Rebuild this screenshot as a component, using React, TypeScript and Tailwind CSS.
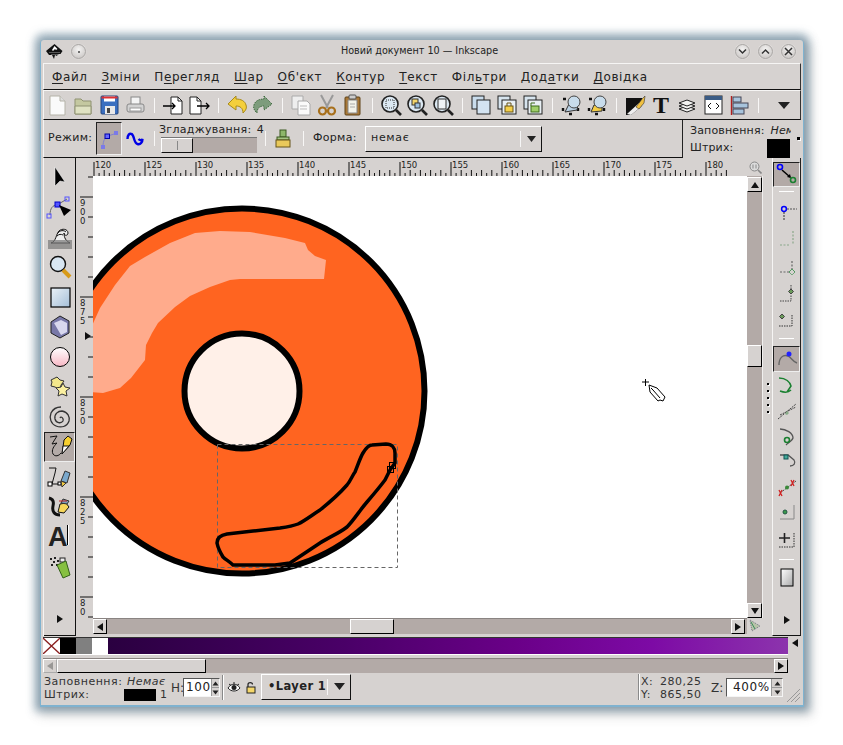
import React from "react";

type P = { children?: React.ReactNode; w?: number; h?: number };
const S = ({ children, w = 24, h = 24 }: P) => (
  <svg width={w} height={h} viewBox={`0 0 ${w} ${h}`}>{children}</svg>
);

const Sep = () => (
  <div className="w-[12px] h-full flex items-center justify-center shrink-0">
    <div className="w-[1px] h-[15px] bg-[#f8f7f6]" />
  </div>
);

const top: React.ReactNode[] = [
  <S key="new"><path d="M5 3h10l5 5v14H5z" fill="#fafafa" stroke="#b5b3a8" /><path d="M15 3v5h5" fill="#ddd" stroke="#b5b3a8" /></S>,
  <S key="open"><path d="M4 6h6l2 2h8v13H4z" fill="#c4c8a0" stroke="#8f9272" /><path d="M4 13h16v8H4z" fill="#dfe2c2" stroke="#8f9272" /></S>,
  <S key="save"><rect x="4" y="3" width="17" height="18" rx="1" fill="#3a6fc0" stroke="#24457a" /><rect x="7" y="3.5" width="11" height="5" fill="#fff" /><rect x="4.5" y="3.5" width="16" height="2" fill="#e03030" /><rect x="8" y="13" width="10" height="8" fill="#e8e8e8" /><rect x="10" y="15" width="3" height="5" fill="#444" /></S>,
  <S key="print"><rect x="8" y="4" width="9" height="8" fill="#f4f4f4" stroke="#888" /><rect x="4" y="11" width="17" height="8" rx="2" fill="#d2d2d2" stroke="#888" /><rect x="7" y="15" width="11" height="3" fill="#fff" stroke="#999" /></S>,
  <Sep key="s1" />,
  <S key="imp"><path d="M10 4h7l4 4v13H10z" fill="#fff" stroke="#222" /><path d="M17 4v4h4" fill="none" stroke="#222" /><path d="M2 13h12M11 10l3 3-3 3" fill="none" stroke="#000" strokeWidth="1.3" /></S>,
  <S key="exp"><path d="M3 4h7l4 4v13H3z" fill="#fff" stroke="#222" /><path d="M10 4v4h4" fill="none" stroke="#222" /><path d="M10 13h12M19 10l3 3-3 3" fill="none" stroke="#000" strokeWidth="1.3" /></S>,
  <Sep key="s2" />,
  <S key="undo"><path d="M11 3 3 11l8 6v-4c4 0 7 2 7 7 3-3 4-5 3-8-1-4-5-6-10-6z" fill="#f4cf3c" stroke="#a88a1a" /></S>,
  <S key="redo"><path d="M13 3l8 8-8 6v-4c-4 0-7 2-7 7-3-3-4-5-3-8 1-4 5-6 10-6z" fill="#7d9c7c" stroke="#3f6a3f" strokeDasharray="1.5 1" /></S>,
  <Sep key="s3" />,
  <S key="copy"><path d="M3 3h11v13H3z" fill="#eee" stroke="#aaa" /><path d="M9 8h9l3 3v11H9z" fill="#fafafa" stroke="#aaa" /><path d="M11 13h7M11 16h7" stroke="#bbb" /></S>,
  <S key="cut"><path d="M6 2l7 13M18 2l-7 13" stroke="#999" strokeWidth="2" /><circle cx="7.5" cy="18" r="3.5" fill="none" stroke="#a8701c" strokeWidth="2.2" /><circle cx="16.5" cy="18" r="3.5" fill="none" stroke="#a8701c" strokeWidth="2.2" /></S>,
  <S key="paste"><rect x="4" y="4" width="15" height="18" rx="1" fill="#a87838" stroke="#5e4218" /><path d="M7 7h9v13H7z" fill="#f2f2ea" stroke="#888" /><rect x="8" y="2" width="7" height="4" rx="1" fill="#ccc" stroke="#555" /><path d="M9 11h5M9 14h5" stroke="#aaa" /></S>,
  <Sep key="s4" />,
  <S key="z1"><circle cx="11" cy="11" r="8" fill="#dbe8f2" stroke="#222" strokeWidth="1.6" /><rect x="7" y="7" width="8" height="8" fill="none" stroke="#333" strokeDasharray="1 1" /><path d="M17 17l5 5" stroke="#222" strokeWidth="2.6" /></S>,
  <S key="z2"><circle cx="11" cy="11" r="8" fill="#dbe8f2" stroke="#222" strokeWidth="1.6" /><rect x="7" y="6" width="6" height="6" fill="#f3d56a" stroke="#333" /><rect x="10" y="10" width="5" height="5" fill="#9cc0de" stroke="#333" /><path d="M17 17l5 5" stroke="#222" strokeWidth="2.6" /></S>,
  <S key="z3"><circle cx="11" cy="11" r="8" fill="#dbe8f2" stroke="#222" strokeWidth="1.6" /><rect x="7" y="6" width="8" height="10" fill="#eef3f7" stroke="#333" /><path d="M17 17l5 5" stroke="#222" strokeWidth="2.6" /></S>,
  <Sep key="s5" />,
  <S key="dup"><rect x="3" y="3" width="12" height="13" fill="#c9dcec" stroke="#222" /><rect x="8" y="7" width="13" height="14" fill="#d3e3f1" stroke="#222" /></S>,
  <S key="clone"><rect x="3" y="3" width="12" height="13" fill="#d7e4ee" stroke="#222" /><rect x="7" y="7" width="14" height="14" fill="#e8eff4" stroke="#222" /><rect x="10" y="13" width="8" height="6" fill="#f3cf4a" stroke="#6a5414" /><path d="M12 13v-3h4v3" fill="none" stroke="#6a5414" /></S>,
  <S key="unlink"><rect x="3" y="3" width="12" height="13" fill="#d7e4ee" stroke="#222" /><rect x="7" y="7" width="14" height="14" fill="#e8eff4" stroke="#222" /><rect x="10" y="13" width="8" height="6" fill="#9fce6a" stroke="#3c6a1a" /><path d="M10 13v-3h4" fill="none" stroke="#3c6a1a" /></S>,
  <Sep key="s6" />,
  <S key="grp"><rect x="4" y="6" width="15" height="15" fill="none" stroke="#111" strokeDasharray="3 9" strokeWidth="2.4" /><path d="M6 19l4-8h9l-1 6z" fill="#b9d0e3" stroke="#333" /><circle cx="15" cy="9" r="6" fill="#c8dceb" stroke="#444" /></S>,
  <S key="ung"><rect x="4" y="6" width="15" height="15" fill="none" stroke="#111" strokeDasharray="3 9" strokeWidth="2.4" /><path d="M6 19l3-7h8v6z" fill="#f4cd45" stroke="#333" /><circle cx="15" cy="9" r="6" fill="#c8dceb" stroke="#444" /></S>,
  <Sep key="s7" />,
  <S key="fill"><path d="M3 5h16v8L8 22H3z" fill="#111" /><path d="M8 22l11-9-3-3L4 21z" fill="#eee" /><path d="M13 14l6-8 3-3-1 7-5 6z" fill="#f0c040" stroke="#333" strokeWidth=".6" /></S>,
  <div key="T" className="font-['Liberation_Serif',serif] font-bold text-[24px] leading-[24px] text-[#111]">T</div>,
  <S key="lay"><g fill="#f4f4f2" stroke="#222"><path d="M4 16l8-3 8 3-8 3z" /><path d="M4 13l8-3 8 3-8 3z" /><path d="M4 10l8-3 8 3-8 3z" /></g></S>,
  <S key="xml"><rect x="4" y="3" width="17" height="18" fill="#fff" stroke="#222" /><rect x="4" y="3" width="17" height="4" fill="#3b5c85" /><path d="M10 10l-3 3 3 3M15 10l3 3-3 3" fill="none" stroke="#111" /></S>,
  <S key="align"><path d="M4.5 3v19" stroke="#b02020" strokeWidth="1.4" /><rect x="6" y="4" width="8" height="5" fill="#a8c4dc" stroke="#445" /><rect x="6" y="10" width="15" height="5" fill="#a8c4dc" stroke="#445" /><rect x="6" y="16" width="11" height="5" fill="#a8c4dc" stroke="#445" /></S>,
  <Sep key="s8" />,
];

const tools: React.ReactNode[] = [
  <S key="sel"><path d="M7 2v19l5-5 5 1z" fill="#000" stroke="#fff" strokeWidth=".5" /></S>,
  <S w={30} key="node"><path d="M5 20c0-7 3-10 7-10l10-6" fill="none" stroke="#666" /><rect x="10" y="7" width="5" height="5" fill="#55f" stroke="#00c" /><rect x="20" y="2" width="4" height="4" fill="none" stroke="#55f" /><rect x="2" y="19" width="4" height="4" fill="none" stroke="#55f" /><path d="M14 10l12 5-7 6z" fill="#000" /></S>,
  <S w={26} key="tweak"><path d="M4 18c5-1 5-9 8-12 3-3 9-2 9 2 0 3-4 3-4 0 0 5 2 8 6 10z" fill="#eee" stroke="#111" /><path d="M11 8c2-3 6-3 8-1M10 11c2-2 4-2 6-1" fill="none" stroke="#111" /><path d="M1 15h24v9H1z" fill="#777" opacity=".7" /></S>,
  <S key="zoom"><circle cx="10" cy="9" r="7.5" fill="#d8e6f2" stroke="#111" strokeWidth="1.4" /><path d="M15 15l7 7" stroke="#d89a18" strokeWidth="4" /></S>,
  <S key="rect"><rect x="3" y="3" width="19" height="19" fill="url(#gRect)" stroke="#000" strokeWidth="1.2" /></S>,
  <S key="3d"><path d="M12 1l9 5v12l-9 5-9-5V7z" fill="#7878a8" stroke="#222" /><path d="M6 8l7-3 6 3v9l-6 3z" fill="#d8d8ee" /></S>,
  <S key="ell"><circle cx="12" cy="12" r="9.5" fill="url(#gEll)" stroke="#000" strokeWidth="1" /></S>,
  <S key="star"><path d="M3 5l6-3 3 3 4 1-3 4-1 5-5-3-4-1 1-4z" fill="#f3e88c" stroke="#333" /><path d="M15 8l2 4 5 1-4 3 1 5-5-2-4 2 1-5-3-3 5-1z" fill="#fbf0a0" stroke="#333" /></S>,
  <S key="spiral"><path d="M12 13c1-2 4 0 3 3-2 3-7 2-8-2-1-5 3-8 7-8 6 1 8 6 7 10-2 6-8 7-13 5-5-2-7-8-5-13 2-4 6-6 10-6" fill="none" stroke="#333" strokeWidth="1.300" /></S>,
  <S w={28} h={26} key="pencil"><path d="M4 3l7-1-5 8 5-1c-3 3-6 7-4 11 2 3 6 2 8-1" fill="none" stroke="#111" /><path d="M16 20l2-14 4-4 4 3-2 6z" fill="#f8d030" stroke="#111" /><path d="M16 20l1-8 6 0z" fill="#fff" stroke="#111" /></S>,
  <S w={26} key="pen"><path d="M2 3h7l-1 5-3 11" fill="none" stroke="#111" /><path d="M5 19h9" stroke="#111" /><rect x="1" y="17" width="4" height="4" fill="#fff" stroke="#000" /><rect x="11" y="17" width="3" height="3" fill="#fff" stroke="#000" /><path d="M14 16l4-10 5 2-3 10z" fill="#7aa8cc" stroke="#333" /><path d="M14 16l5 2-4 4z" fill="#f4cc44" stroke="#333" /></S>,
  <S w={26} key="cal"><path d="M2 3c4 1 5 4 4 8-1 5 1 9 7 9" fill="none" stroke="#111" strokeWidth="3" /><path d="M11 17l2-8 6-1 3 4-5 6z" fill="#f6d65a" stroke="#111" /><path d="M14 8l2-4 6 2-2 3z" fill="#7aa0c0" stroke="#333" /><path d="M12 6h8" stroke="#c02020" /></S>,
  <div key="text" className="flex items-start h-full pt-[3px] pl-[4px] w-full">
    <span className="font-['Liberation_Sans',sans-serif] font-bold text-[27px] leading-[24px] text-[#222]">A</span>
    <span className="w-[1px] h-[20px] bg-black -ml-[1px] shadow-[1px_0_0_#fff]" />
  </div>,
  <S key="spray"><g fill="#222"><rect x="2" y="3" width="2" height="2" /><rect x="6" y="2" width="2" height="2" /><rect x="5" y="6" width="2" height="2" /><rect x="9" y="5" width="2" height="2" /><rect x="3" y="9" width="2" height="2" /><rect x="8" y="9" width="2" height="2" /></g><rect x="12" y="3" width="5" height="4" fill="#eee" stroke="#222" /><path d="M9 10l9-4 4 14-7 3z" fill="#86c040" stroke="#33601a" /></S>,
];

const snap: [number, boolean, React.ReactNode][] = [
  [25, true, <S key="a"><circle cx="5" cy="4" r="2.5" fill="none" stroke="#00f" strokeWidth="1.6" /><path d="M7 7l8 7" stroke="#000" strokeWidth="1.5" /><path d="M12 14l4 1-1-4z" fill="#000" /><circle cx="18" cy="17" r="2.5" fill="none" stroke="#1a8030" strokeWidth="1.6" /></S>],
  [8, false, <div key="s1" className="w-[15px] h-[1px] bg-white" />],
  [29, false, <S key="b"><circle cx="9" cy="11" r="2.4" fill="none" stroke="#00f" strokeWidth="1.5" /><path d="M12 11h10" stroke="#555" strokeDasharray="2 1" /><path d="M9 14v8" stroke="#333" strokeDasharray="2 1" /></S>],
  [29, false, <S key="c"><path d="M5 18h9M18 4v14" stroke="#8aa88a" strokeWidth="1.2" strokeDasharray="2 1.5" fill="none" /></S>],
  [27, false, <S key="d"><path d="M5 17h9M17 6v8" stroke="#666" strokeWidth="1.2" strokeDasharray="2 1.5" /><path d="M17 14l3 3-3 3-3-3z" fill="none" stroke="#1a8030" strokeDasharray="1 .6" /></S>],
  [25, false, <S key="e"><path d="M5 20h11v-6M16 4v6" stroke="#444" strokeDasharray="1.5 1" fill="none" /><path d="M16 8l2.5 2.5-2.5 2.5-2.5-2.5z" fill="#6a9a5a" stroke="#444" /></S>],
  [25, false, <S key="f"><path d="M4 20h13V8" stroke="#333" strokeDasharray="1.5 1" fill="none" /><path d="M7 8l2.5 2.5-2.5 2.5-2.5-2.5z" fill="#6a9a5a" stroke="#444" /></S>],
  [16, false, <div key="s2" className="w-[15px] h-[1px] bg-white" />],
  [26, true, <S key="g"><path d="M4 18c0-7 4-11 9-9 3 1 4 5 9 7" fill="none" stroke="#666" strokeWidth="1.4" /><circle cx="14" cy="7" r="2.5" fill="#22f" /></S>],
  [25, false, <S key="h"><path d="M4 5c7 0 11 4 12 8l-4 6M5 18c5 2 9 1 11-1" fill="none" stroke="#1a8030" strokeWidth="1.5" /></S>],
  [27, false, <S key="i"><path d="M3 20L21 5M5 16l16-8" stroke="#444" strokeDasharray="2 1" /><path d="M10 15l2 1 2-2-2-2z" fill="#8a8" /></S>],
  [25, false, <S key="j"><path d="M5 4c6 0 13 4 13 9-1 3-5 5-7 7" fill="none" stroke="#555" strokeWidth="1.3" /><circle cx="12" cy="15" r="2.5" fill="none" stroke="#1a8030" strokeWidth="1.6" /></S>],
  [25, false, <S key="k"><path d="M5 5h8l6 5c2 3 0 6-4 6" fill="none" stroke="#555" strokeWidth="1.3" /><rect x="9" y="5" width="4" height="4" fill="#4a9" stroke="#155" /></S>],
  [26, false, <S key="l"><path d="M5 18L21 6" stroke="#444" strokeDasharray="2 1" /><g fill="none" stroke="#d02020" strokeWidth="1.3"><path d="M4 15l3 6M7 15l-3 6M16 5l3 6M19 5l-3 6" /></g><circle cx="12" cy="12.5" r="2" fill="#3a8a3a" /></S>],
  [25, false, <S key="m"><path d="M19 4v14H5" fill="none" stroke="#888" /><circle cx="10" cy="11" r="2" fill="#3a9a4a" stroke="#254" /></S>],
  [27, false, <S key="n"><path d="M4 11h11M9.500 6v10" stroke="#222" strokeWidth="1.6" /><path d="M4 20h15V5" stroke="#333" strokeDasharray="1.5 1" fill="none" /></S>],
  [14, false, <div key="s3" className="w-[15px] h-[1px] bg-white" />],
  [24, false, <S key="o"><rect x="6" y="3" width="12" height="17" fill="url(#gPage)" stroke="#000" /></S>],
];

const Tri = ({ d = "r", c = "" }: { d?: "r" | "l" | "u" | "d"; c?: string }) => {
  const path = { r: "M2 1l6 4-6 4z", l: "M8 1L2 5l6 4z", u: "M5 2l4 6H1z", d: "M1 2h8L5 8z" }[d];
  return (
    <svg width="10" height="10" viewBox="0 0 10 10" className={c}>
      <path d={path} fill="#111" />
    </svg>
  );
};

const ArrowBtn = ({ d, c }: { d: "r" | "l" | "u" | "d"; c: string }) => (
  <div className={`bg-[#d6d2d0] border-t border-l border-t-white border-l-white border-r border-b border-r-black border-b-black flex items-center justify-center shrink-0 ${c}`}>
    <Tri d={d} />
  </div>
);

const Hr = () => {
  const ticks = [];
  for (let i = 0; i < 125; i++) {
    const x = 94 + i * 5.1;
    const major = i % 10 === 0;
    ticks.push(<path key={i} d={`M${x} 176v${major ? -14 : i % 2 === 0 ? -6 : -3}`} stroke="#111" strokeWidth="1" />);
    if (major) {
      ticks.push(
        <text key={`t${i}`} x={x + 1} y="168" fontSize="8.5" fill="#222" className="font-['DejaVu_Sans',sans-serif]">
          {120 + i / 2}
        </text>
      );
    }
  }
  return (
    <svg width="654" height="18" viewBox="93 158 654 18">{ticks}</svg>
  );
};

const Vr = () => {
  const items = [];
  for (let y = 177; y < 636; y += 20) {
    const major = (y - 197) % 100 === 0;
    items.push(<path key={y} d={`M${major ? 80 : 88} ${y}H93`} stroke="#111" />);
  }
  [["9", "0", "0", 197], ["8", "7", "5", 297], ["8", "5", "0", 397], ["8", "2", "5", 497], ["8", "0", "", 597]].forEach((l) => {
    const y = l[3] as number;
    [0, 1, 2].forEach((i) =>
      items.push(
        <text key={`${y}-${i}`} x="80" y={y + 9 + i * 9} fontSize="8.500" fill="#222" className="font-['DejaVu_Sans',sans-serif]">
          {l[i] as string}
        </text>
      )
    );
  });
  items.push(<path key="mk" d="M85 332l6 4-6 4z" fill="#111" />);
  return <svg width="17" height="460" viewBox="76 176 17 460">{items}</svg>;
};

const Canvas = () => (
  <svg width="654" height="442" viewBox="93 176 654 442" className="bg-white block">
    <defs>
      <linearGradient id="gRect" x1="0" y1="0" x2="1" y2="1"><stop offset="0" stopColor="#eaf1f7" /><stop offset="1" stopColor="#a5bfd8" /></linearGradient>
      <linearGradient id="gEll" x1="0" y1="0" x2="0" y2="1"><stop offset="0" stopColor="#fff" /><stop offset="1" stopColor="#f8b8c4" /></linearGradient>
      <linearGradient id="gPage" x1="0" y1="0" x2="1" y2="1"><stop offset="0" stopColor="#fff" /><stop offset="1" stopColor="#aaa" /></linearGradient>
    </defs>
    <circle cx="242" cy="391" r="182.500" fill="#ff6420" stroke="#000" strokeWidth="6" />
    <path d="M90 392L103 393L120 388L131 378L145 360L146 345L152 333L158 323L175 307L190 296L210 287L230 280L240 279L324 279L326 260L315 256L308 250L305 243L285 238L250 232L220 231L195 233L170 243L145 257L130 266L115 285L100 308L90 330z" fill="#ffab8c" />
    <circle cx="242" cy="391" r="57.500" fill="#fff0e8" stroke="#000" strokeWidth="6" />
    <rect x="217.500" y="444.500" width="180" height="123" fill="none" stroke="#666" strokeDasharray="4 3" />
    <path d="M217 543C217 538 221 535 227 534L253 531L280 528C287 527 293 526 298 524C306 520 312 515 320 510C330 502 340 493 347 485C351 480 352 476 355 472C358 465 360 458 363 453C366 448 369 445 372 445L386 444C392 444 395 448 395 453L395 463C393 466 391 468 390 470L385 480C379 488 373 495 367 502C360 510 354 520 347 527C338 534 329 537 320 543L290 563L275 565L233 565C229 561 226 560 223 557C220 552 218 548 217 543Z" fill="none" stroke="#000" strokeWidth="3.500" strokeLinejoin="round" />
    <rect x="389.500" y="462.500" width="6" height="6" fill="none" stroke="#000" />
    <rect x="387.500" y="466.500" width="6" height="6" fill="none" stroke="#000" />
    <path d="M642 382h7M645.500 379v7" stroke="#000" />
    <path d="M649 385l8 3 8 9-2 4-3-1-2 1-8-9z" fill="#fff" stroke="#000" />
    <path d="M653 390l7 8M651 388l2 2" stroke="#000" />
  </svg>
);

const F = "font-['DejaVu_Sans',sans-serif]";

const Spin = ({ w, v, c }: { w: string; v: string; c: string }) => (
  <div className={`flex items-stretch h-[19px] bg-white border-t border-l border-t-[#555] border-l-[#555] border-r border-b border-r-[#f5f5f5] border-b-[#f5f5f5] ${w}`}>
    <div className={`flex-1 text-[12px] leading-[17px] text-[#222] tracking-[0.6px] ${c}`}>{v}</div>
    <div className="w-[11px] flex flex-col bg-[#d6d2d0] border-l border-[#999]">
      <div className="flex-1 flex items-center justify-center"><svg width="7" height="5" viewBox="0 0 7 5"><path d="M.5 4.500L3.500.5l3 4z" fill="#222" /></svg></div>
      <div className="flex-1 flex items-center justify-center border-t border-[#999]"><svg width="7" height="5" viewBox="0 0 7 5"><path d="M.5.5h6l-3 4z" fill="#222" /></svg></div>
    </div>
  </div>
);

const Mn = ({ a, u, b }: { a?: string; u: string; b: string }) => (
  <span className="px-[7px]">{a}<span className="underline underline-offset-2">{u}</span>{b}</span>
);

const RoundBtn = ({ children }: { children?: React.ReactNode }) => (
  <div className="w-[15px] h-[15px] rounded-full bg-[radial-gradient(circle_at_50%_35%,#f4f3f2,#c4c0be)] border border-[#aaa7a5] flex items-center justify-center shadow-[0_0_1px_#fff]">
    {children}
  </div>
);

export default function App() {
  return (
    <div className={`w-[843px] h-[745px] bg-white pl-[41px] pt-[40px] overflow-hidden ${F}`}>
      <div className="w-[762px] h-[665px] bg-[#d6d2d0] rounded-t-[3px] flex flex-col px-[2px] text-[#222] shadow-[0_1px_0_1px_#7fb2cf,0_0_9px_6px_rgba(70,110,135,0.55),3px_5px_12px_5px_rgba(80,80,80,0.25)]">
        {/* title bar */}
        <div className="h-[23px] flex items-center shrink-0 relative">
          <div className="w-[17px] ml-[3px] flex">
            <svg width="17" height="16" viewBox="0 0 17 16"><path d="M8.500 0l8 7-2 3H12l-1 2-2-1-1 4-2-4H3L0 7z" fill="#111" /><path d="M8.500 2l3 3-1.500 1-1-1-2 2-1-1z" fill="#fff" /><path d="M3 8.500h11M5 10.500h8" stroke="#888" strokeWidth=".6" /></svg>
          </div>
          <div className="ml-[8px]">
            <RoundBtn><div className="w-[2px] h-[2px] rounded-full bg-[#444]" /></RoundBtn>
          </div>
          <div className="flex-1 text-center text-[10.700px] text-[#222] pl-[20px] pr-[2px] font-['DejaVu_Sans_Condensed','Liberation_Sans',sans-serif]">Новий документ 10 — Inkscape</div>
          <div className="flex gap-[8px] pr-[5px]">
            <RoundBtn><svg width="9" height="7" viewBox="0 0 9 7"><path d="M1 1.500l3.500 3.500L8 1.500" fill="none" stroke="#333" strokeWidth="1.5" /></svg></RoundBtn>
            <RoundBtn><svg width="9" height="7" viewBox="0 0 9 7"><path d="M1 5.500L4.500 2 8 5.500" fill="none" stroke="#333" strokeWidth="1.5" /></svg></RoundBtn>
            <RoundBtn><svg width="9" height="9" viewBox="0 0 9 9"><path d="M1 1l7 7M8 1L1 8" fill="none" stroke="#333" strokeWidth="1.5" /></svg></RoundBtn>
          </div>
        </div>
        {/* menu */}
        <div className="h-[27px] shrink-0 flex items-center pl-[1px] text-[12px] tracking-[0.6px] border-t border-l border-t-[#f6f5f4] border-l-[#f6f5f4] border-r border-b border-r-[#333] border-b-[#111]">
          <Mn u="Ф" b="айл" />
          <Mn u="З" b="міни" />
          <Mn a="П" u="е" b="регляд" />
          <Mn u="Ш" b="ар" />
          <Mn u="О" b="б'єкт" />
          <Mn u="К" b="онтур" />
          <Mn u="Т" b="екст" />
          <Mn a="Філ" u="ь" b="три" />
          <Mn a="Дод" u="а" b="тки" />
          <Mn u="Д" b="овідка" />
        </div>
        {/* commands */}
        <div className="h-[30px] shrink-0 flex items-center border-t border-l border-t-[#f6f5f4] border-l-[#f6f5f4] border-r border-b border-r-[#333] border-b-[#111]">
          {top.map((n, i) => (
            <div key={i} className={`h-full flex items-center justify-center shrink-0 ${(n as React.ReactElement).type === Sep ? "" : "w-[26px]"}`}>{n}</div>
          ))}
          <div className="flex-1 flex justify-end pr-[10px]"><svg width="12" height="7" viewBox="0 0 12 7"><path d="M0 0h12L6 7z" fill="#222" /></svg></div>
        </div>
        {/* tool controls + style */}
        <div className="h-[38px] shrink-0 flex">
          <div className="w-[640px] shrink-0 flex items-center text-[11px] tracking-[0.3px] border-l border-l-[#f6f5f4] border-r border-b border-r-[#222] border-b-[#111]">
            <div className="ml-[4px] w-[48px]">Режим:</div>
            <div className="w-[26px] h-[33px] flex items-center justify-center bg-[#b3aaa7] border-t border-l border-t-[#222] border-l-[#222] border-r border-b border-r-[#eee] border-b-[#eee]">
              <S w={20} h={26}><path d="M4 21c0-7 2-9 5-11l9-3" fill="none" stroke="#8080d0" /><rect x="6" y="8" width="4.500" height="4.500" fill="#66f" stroke="#00a" /><rect x="15" y="5" width="4" height="4" fill="#7a7ae8" /><rect x="2" y="19" width="4" height="4" fill="#7a7ae8" /></S>
            </div>
            <div className="w-[26px] flex justify-center">
              <svg width="18" height="14" viewBox="0 0 18 14"><path d="M1.500 7c0-4 2-6 4-5 3 1 2 9 6 10 3 1 5-2 5-5-1 2-3 1-4 0" fill="none" stroke="#0000e6" strokeWidth="2.400" /></svg>
            </div>
            <Sep />
            <div className="flex flex-col w-[105px] mt-[-1px] -ml-[1px]">
              <div className="flex justify-between leading-[13px]"><span>Згладжування:</span><span>4</span></div>
              <div className="h-[16px] w-[96px] ml-[2px] mt-[1px] bg-[#b3aaa7] border-t border-[#777]">
                <div className="w-[32px] h-[15px] bg-[#d6d2d0] border-t border-l border-t-white border-l-white border-r border-b border-r-[#111] border-b-[#111] flex items-center justify-center"><div className="w-[1px] h-[9px] bg-[#888]" /></div>
              </div>
            </div>
            <div className="w-[2px] flex justify-center"><div className="w-[1px] h-[15px] bg-[#f8f7f6]" /></div>
            <div className="w-[24px] ml-[5px] flex justify-center">
              <S w={16} h={20}><rect x="5" y="1" width="6" height="7" fill="#8db66a" stroke="#3c5a22" /><rect x="2" y="8" width="12" height="3" fill="#a6c584" stroke="#3c5a22" /><rect x="1" y="11" width="14" height="7" fill="#e9c95a" stroke="#66541a" /></S>
            </div>
            <div className="w-[16px] flex justify-center"><div className="w-[1px] h-[15px] bg-[#f8f7f6]" /></div>
            <div className="ml-[2px] w-[52px]">Форма:</div>
            <div className="w-[177px] h-[26px] flex items-center bg-[#d6d2d0] border-t border-l border-t-white border-l-white border-r border-b border-r-[#111] border-b-[#111]">
              <span className="flex-1 pl-[5px] tracking-[0.7px]">немає</span>
              <div className="w-[1px] h-[16px] bg-[#f6f6f6]" />
              <div className="w-[20px] flex justify-center"><svg width="9" height="6" viewBox="0 0 9 6"><path d="M0 0h9L4.500 6z" fill="#222" /></svg></div>
            </div>
          </div>
          <div className="flex-1 flex flex-col pl-[7px] text-[11px] tracking-[0.15px] relative">
            <div className="h-[19px] flex items-end whitespace-nowrap overflow-hidden w-[101px]"><span>Заповнення:</span><span className="italic ml-[6px]">Немає</span></div>
            <div className="flex-1 flex items-center justify-between w-[100px]"><span>Штрих:</span><div className="w-[23px] h-[19px] bg-black" /></div>
            <div className="absolute right-[1px] top-[17px] w-[3px] h-[3px] bg-black shadow-[1px_1px_0_#fff]" />
          </div>
        </div>
        {/* main */}
        <div className="h-[478px] shrink-0 flex">
          <div className="w-[33px] shrink-0 flex flex-col border-l border-[#f6f5f4] border-r-[1px] border-r-[#111]">
            <div className="flex-1 flex flex-col pt-[4px]">
              {tools.map((t, i) => (
                <div key={i} className={`h-[30px] w-[31px] flex items-center justify-center ${i === 9 ? "bg-[#b3aaa7] border-t border-l border-t-[#222] border-l-[#222] border-r border-b border-r-[#eee] border-b-[#eee]" : ""}`}>{t}</div>
              ))}
            </div>
            <div className="h-[34px] flex items-center justify-center border-b border-b-[#111]"><Tri d="r" /></div>
          </div>
          <div className="w-[687px] shrink-0 flex flex-col">
            <div className="h-[18px] flex shrink-0">
              <div className="w-[17px]" />
              <Hr />
              <div className="w-[16px] flex items-center justify-center">
                <svg width="13" height="13" viewBox="0 0 13 13"><circle cx="5.500" cy="5.500" r="4.500" fill="#dcdcdc" stroke="#888" /><path d="M9 9l3.500 3.500" stroke="#888" strokeWidth="1.600" /><path d="M4 3.500v4M7 3.500v4" stroke="#888" /></svg>
              </div>
            </div>
            <div className="flex h-[460px]">
              <Vr />
              <div className="flex flex-col w-[670px]">
                <div className="flex h-[442px]">
                  <Canvas />
                  <div className="w-[16px] bg-[#b3aaa7] flex flex-col border-r border-[#f0efee]">
                    <ArrowBtn d="u" c="h-[15px] mt-[1px]" />
                    <div className="h-[153px]" />
                    <div className="h-[22px] bg-[#d6d2d0] border-t border-l border-t-white border-l-white border-r border-b border-r-black border-b-black" />
                    <div className="flex-1" />
                    <ArrowBtn d="d" c="h-[15px]" />
                  </div>
                </div>
                <div className="flex h-[18px]">
                  <div className="w-[654px] h-[16px] bg-[#b3aaa7] border-t border-[#8a8482] flex items-center">
                    <ArrowBtn d="l" c="w-[14px] h-[15px]" />
                    <div className="w-[243px]" />
                    <div className="w-[44px] h-[15px] bg-[#d6d2d0] border-t border-l border-t-white border-l-white border-r border-b border-r-black border-b-black" />
                    <div className="flex-1" />
                    <ArrowBtn d="r" c="w-[14px] h-[15px] mr-[2px]" />
                  </div>
                  <div className="w-[16px] flex justify-center pt-[1px]">
                    <svg width="12" height="13" viewBox="0 0 12 13"><path d="M1 1l10 6-8 5z" fill="#b8c4a8" stroke="#778" strokeDasharray="1 1" /><path d="M2 3l4 7" stroke="#3a8a5a" /></svg>
                  </div>
                </div>
              </div>
            </div>
          </div>
          <div className="w-[9px] shrink-0 flex flex-col items-center pt-[225px] gap-[5px]">
            {[0, 1, 2, 3, 4].map((i) => (<div key={i} className="w-[2px] h-[2px] bg-black shadow-[1px_1px_0_#fff]" />))}
          </div>
          <div className="w-[29px] shrink-0 flex flex-col border-l border-[#f6f5f4] border-r-[1.5px] border-r-[#222] border-b border-b-[#111]">
            <div className="flex-1 flex flex-col pt-[4px]">
              {snap.map(([h, active, n], i) => (
                <div key={i} style={{ height: h }} className={`flex items-center justify-center shrink-0 ${active ? "bg-[#b3aaa7] border-t border-l border-t-[#222] border-l-[#222] border-r border-b border-r-[#eee] border-b-[#eee]" : ""}`}>{n}</div>
              ))}
            </div>
            <div className="h-[31px] flex items-center justify-center"><Tri d="r" /></div>
          </div>
        </div>
        {/* palette */}
        <div className="h-[20px] shrink-0 flex pt-[1px]">
          <div className="w-[745px] h-[18px] flex border-t border-t-[#333] border-b border-b-white">
            <div className="w-[17px] bg-white shrink-0">
              <svg width="17" height="16" viewBox="0 0 17 16" className="block"><path d="M0 0l17 16M17 0L0 16" stroke="#8a2020" strokeWidth="1.300" /></svg>
            </div>
            <div className="w-[16px] bg-black shrink-0" />
            <div className="w-[16px] bg-[#808080] shrink-0" />
            <div className="w-[16px] bg-white shrink-0" />
            <div className="flex-1 bg-[linear-gradient(90deg,#2a0040,#4a0068_35%,#6a0088_60%,#7d0aa5_80%,#8c34ad)]" />
          </div>
          <div className="flex-1 flex justify-center pt-[1px]"><Tri d="l" /></div>
        </div>
        {/* palette scrollbar */}
        <div className="h-[18px] shrink-0 pt-[2px]">
          <div className="w-[745px] h-[15px] bg-[#b3aaa7] border-t border-[#8a8482] flex">
            <div className="w-[14px] bg-[#d6d2d0] border-t border-l border-t-white border-l-white border-r border-b border-r-[#aaa] border-b-[#aaa] flex items-center justify-center"><Tri d="l" c="opacity-30" /></div>
            <div className="w-[149px] bg-[#d6d2d0] border-t border-l border-t-white border-l-white border-r border-b border-r-black border-b-black" />
            <div className="flex-1" />
            <ArrowBtn d="r" c="w-[14px]" />
          </div>
        </div>
        {/* status */}
        <div className="flex-1 flex text-[11px] tracking-[0.5px] text-[#333]">
          <div className="w-[128px] shrink-0 pl-[1px] flex flex-col pt-[1px] leading-[13px]">
            <div className="h-[13px] flex whitespace-nowrap"><span className="w-[83px]">Заповнення:</span><span className="italic">Немає</span></div>
            <div className="h-[13px] flex items-center whitespace-nowrap"><span className="w-[80px]">Штрих:</span><div className="w-[32px] h-[12px] bg-black" /><span className="ml-[4px] text-[11px]">1</span></div>
          </div>
          <div className="flex items-center h-[27px]">
            <span className="text-[12px] w-[12px] tracking-normal">H:</span>
            <Spin w="w-[37px]" v="100" c="pl-[2px]" />
            <div className="w-[2px] h-[25px] ml-[2px] bg-white border-l border-[#888]" />
            <div className="w-[20px] flex justify-center"><svg width="14" height="11" viewBox="0 0 14 11"><path d="M1 6c3-5 9-5 12 0-3 4-9 4-12 0z" fill="#fff" stroke="#222" /><circle cx="7" cy="5.500" r="2.500" fill="#222" /><path d="M2 2l2 1.500M7 0v2M12 2l-2 1.500" stroke="#222" /></svg></div>
            <div className="w-[14px] flex justify-center"><svg width="11" height="13" viewBox="0 0 11 13"><path d="M2 6V3.500C2 1 6.500 1 6.500 3.500" fill="none" stroke="#222" strokeWidth="1.200" /><rect x="1" y="6" width="8" height="6" fill="#f5d76a" stroke="#222" /></svg></div>
            <div className="w-[90px] ml-[3px] h-[26px] mt-[-2px] flex items-center bg-[#d6d2d0] border-t border-l border-t-white border-l-white border-r border-b border-r-[#111] border-b-[#111]">
              <span className="flex-1 pl-[6px] font-bold tracking-[0.4px] text-[11.500px] text-[#222]">•Layer 1</span>
              <div className="w-[1px] h-[16px] bg-[#f6f6f6]" />
              <div className="w-[22px] flex justify-center"><svg width="11" height="7" viewBox="0 0 11 7"><path d="M0 0h11L5.500 7z" fill="#222" /></svg></div>
            </div>
          </div>
          <div className="flex-1" />
          <div className="w-[73px] h-[26px] flex flex-col border-l border-[#8a8a8a] pl-[1px] shadow-[inset_1px_0_0_#fff] leading-[13px]">
            <div className="flex pt-[1px]"><span className="w-[20px] pl-[1px]">X:</span><span className="tracking-[0.5px]">280,25</span></div>
            <div className="flex"><span className="w-[20px] pl-[1px]">Y:</span><span className="tracking-[0.5px]">865,50</span></div>
          </div>
          <div className="flex items-center h-[27px]">
            <span className="text-[12px] w-[15px] tracking-normal">Z:</span>
            <Spin w="w-[57px]" v="400%" c="pl-[6px]" />
          </div>
          <div className="w-[18px] flex items-end justify-end pb-[2px]">
            <svg width="16" height="16" viewBox="0 0 16 16"><path d="M2 15L15 2M6 15l9-9M10 15l5-5" stroke="#999" /></svg>
          </div>
        </div>
      </div>
    </div>
  );
}
